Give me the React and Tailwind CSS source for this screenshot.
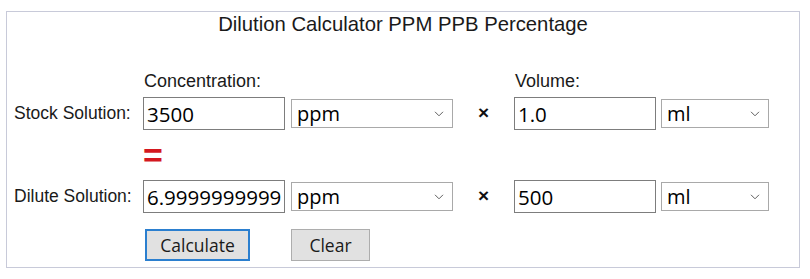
import { useState } from "react";

const arial = "font-['Liberation_Sans',Arial,sans-serif]";
const ui = "font-['Open_Sans','Noto_Sans',sans-serif]";

function Chevron() {
    return (
        <svg className="pointer-events-none absolute right-[9px] top-[12px]" width="10" height="6" viewBox="0 0 10 6" fill="none">
            <path d="M1 0.8l4 4 4-4" stroke="#5f5f5f" strokeWidth="1" />
        </svg>
    );
}

function UnitSelect({ value, options, width }) {
    return (
        <div className={`relative h-[29px] ${width}`}>
            <select
                defaultValue={value}
                className={`h-full w-full appearance-none border border-[#a9a9a9] bg-white pl-[5px] pr-6 py-0 text-[20px] leading-[27px] text-black outline-none ${ui}`}
            >
                {options.map((o) => (
                    <option key={o} value={o}>{o}</option>
                ))}
            </select>
            <Chevron />
        </div>
    );
}

function NumInput({ value, onChange }) {
    return (
        <input
            type="text"
            value={value}
            onChange={(e) => onChange(e.target.value)}
            className={`h-[33px] w-[142px] border border-[#7d7d7d] bg-white px-[3px] text-[20.5px] text-black outline-none ${ui}`}
        />
    );
}

const CONC = ["ppm", "ppb", "%"];
const VOL = ["ml", "l"];

function Row({ label, conc, setConc, vol, setVol }) {
    return (
        <div className="flex h-[33px] items-center">
            <div className={`w-[136px] pl-[7px] text-[17.5px] text-[#1a1a1a] ${arial}`}>{label}</div>
            <NumInput value={conc} onChange={setConc} />
            <div className="ml-[6px]">
                <UnitSelect value="ppm" options={CONC} width="w-[162px]" />
            </div>
            <div className={`w-[61px] text-center text-[19px] font-bold text-[#111] ${arial}`}>×</div>
            <NumInput value={vol} onChange={setVol} />
            <div className="ml-[5px]">
                <UnitSelect value="ml" options={VOL} width="w-[108px]" />
            </div>
        </div>
    );
}

export default function App() {
    const [c1, setC1] = useState("3500");
    const [v1, setV1] = useState("1.0");
    const [c2, setC2] = useState("6.9999999999");
    const [v2, setV2] = useState("500");

    const calculate = () => {
        const r = (parseFloat(c1) * parseFloat(v1)) / parseFloat(v2);
        if (!isNaN(r)) setC2(String(r));
    };

    const clear = () => {
        setC1("");
        setV1("");
        setC2("");
        setV2("");
    };

    return (
        <div className="min-h-screen bg-white pt-[11px] pl-[6px]">
            <div className="h-[257px] w-[794px] border border-[#c8cad9]">
                <h1 className={`h-[24px] text-center text-[20.3px] leading-[24px] text-[#1a1a1a] ${arial}`}>
                    Dilution Calculator PPM PPB Percentage
                </h1>

                <div className={`mt-[34px] flex h-[22px] items-center pl-[137px] text-[18px] text-[#1a1a1a] ${arial}`}>
                    <div className="w-[371px]">Concentration:</div>
                    <div>Volume:</div>
                </div>

                <div className="mt-[5px]">
                    <Row label="Stock Solution:" conc={c1} setConc={setC1} vol={v1} setVol={setV1} />
                </div>

                <div className="flex h-[50px] items-center pl-[136px]">
                    <span className={`text-[34px] font-bold leading-none text-[#d4181f] ${arial}`}>=</span>
                </div>

                <Row label="Dilute Solution:" conc={c2} setConc={setC2} vol={v2} setVol={setV2} />

                <div className={`mt-[16px] flex pl-[138px] text-[17.5px] text-[#1a1a1a] ${ui}`}>
                    <button
                        onClick={calculate}
                        className="h-[32px] w-[105px] border-2 border-[#2b7fcf] bg-[#e1e1e1]"
                    >
                        Calculate
                    </button>
                    <button
                        onClick={clear}
                        className="ml-[41px] h-[32px] w-[79px] border border-[#adadad] bg-[#e1e1e1]"
                    >
                        Clear
                    </button>
                </div>
            </div>
        </div>
    );
}
